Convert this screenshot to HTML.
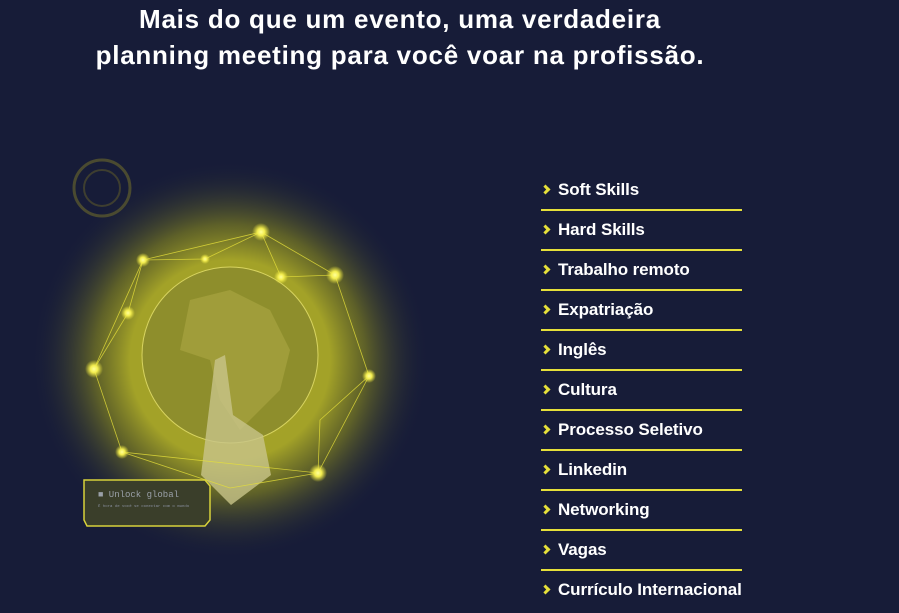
<!DOCTYPE html>
<html><head><meta charset="utf-8"><style>
html,body{margin:0;padding:0;background:#171c38;width:899px;height:613px;overflow:hidden;font-family:"Liberation Sans",sans-serif}
h1{position:absolute;left:0;width:800px;top:1px;margin:0;text-align:center;color:#fff;font-size:26px;line-height:36px;font-weight:bold;letter-spacing:0.75px}
ul{position:absolute;left:541px;top:171px;width:201px;margin:0;padding:0;list-style:none}
li{height:38px;border-bottom:2px solid #e6e03a;color:#fff;font-weight:bold;line-height:38px;padding-left:17px;position:relative;font-size:17px;white-space:nowrap;letter-spacing:-0.1px}
li:last-child{border-bottom:none}
li:before{content:"";position:absolute;left:1px;top:15px;width:4px;height:4px;border-right:3px solid #e6e03a;border-top:3px solid #e6e03a;transform:rotate(45deg)}
svg{position:absolute;left:0;top:140px}
</style></head><body>
<h1>Mais do que um evento, uma verdadeira<br>planning meeting para você voar na profissão.</h1>
<svg width="480" height="473" viewBox="0 140 480 473">
<defs>
<radialGradient id="g" cx="230" cy="360" r="200" gradientUnits="userSpaceOnUse">
<stop offset="0" stop-color="#a6a42a"/><stop offset="0.5" stop-color="#a3a228"/><stop offset="0.68" stop-color="#6a6c26" stop-opacity="0.85"/><stop offset="1" stop-color="#171c38" stop-opacity="0"/></radialGradient>
<radialGradient id="n"><stop offset="0" stop-color="#ffff9a"/><stop offset="0.4" stop-color="#f4ee50"/><stop offset="1" stop-color="#e6e03a" stop-opacity="0"/></radialGradient>
</defs>
<ellipse cx="235" cy="360" rx="200" ry="225" fill="url(#g)"/>
<circle cx="230" cy="355" r="88" fill="#8e8e2c" stroke="#d8d460" stroke-width="1"/>
<path d="M190 300 l40 -10 40 20 20 40 -10 40 -40 40 -20 -30 -10 -40 -30 -10z" fill="#a8a440" opacity="0.7"/>
<path d="M215 360 l10 -5 8 60 30 20 8 40 -40 30 -30 -30z" fill="#c8c48a" opacity="0.8"/>
<g stroke="#e6e03a" stroke-width="0.8" fill="none" opacity="0.8">
<path d="M261 232 L143 260 L94 369 L122 452 L318 473 L369 376 L335 275 L261 232 L281 277 L335 275 M143 260 L205 259 L261 232 M143 260 L128 313 L94 369 M261 232 L205 259 M122 452 L94 369 M318 473 L230 488 L122 452 M369 376 L320 420 L318 473"/>
</g>
<g>
<circle cx="261" cy="232" r="9" fill="url(#n)"/><circle cx="143" cy="260" r="7" fill="url(#n)"/><circle cx="205" cy="259" r="5" fill="url(#n)"/><circle cx="281" cy="277" r="7" fill="url(#n)"/><circle cx="335" cy="275" r="9" fill="url(#n)"/><circle cx="128" cy="313" r="7" fill="url(#n)"/><circle cx="94" cy="369" r="9" fill="url(#n)"/><circle cx="369" cy="376" r="7" fill="url(#n)"/><circle cx="122" cy="452" r="7" fill="url(#n)"/><circle cx="318" cy="473" r="9" fill="url(#n)"/>
</g>
<circle cx="102" cy="188" r="28" fill="none" stroke="#4a4a30" stroke-width="3"/>
<circle cx="102" cy="188" r="18" fill="none" stroke="#3e3e30" stroke-width="2"/>
<path d="M84 480 H205 L210 486 V520 L205 526 H87 L84 520Z" fill="#3a3e2a" stroke="#d8d23a" stroke-width="1.5"/>
<text x="98" y="497" font-family="Liberation Mono,monospace" font-size="9" fill="#9aa0a8">■ Unlock global</text>
<text x="98" y="507" font-family="Liberation Mono,monospace" font-size="4" fill="#8a90a0">É hora de você se conectar com o mundo</text>
</svg>
<ul>
<li>Soft Skills</li><li>Hard Skills</li><li>Trabalho remoto</li><li>Expatriação</li><li>Inglês</li><li>Cultura</li><li>Processo Seletivo</li><li>Linkedin</li><li>Networking</li><li>Vagas</li><li>Currículo Internacional</li>
</ul>
</body></html>
